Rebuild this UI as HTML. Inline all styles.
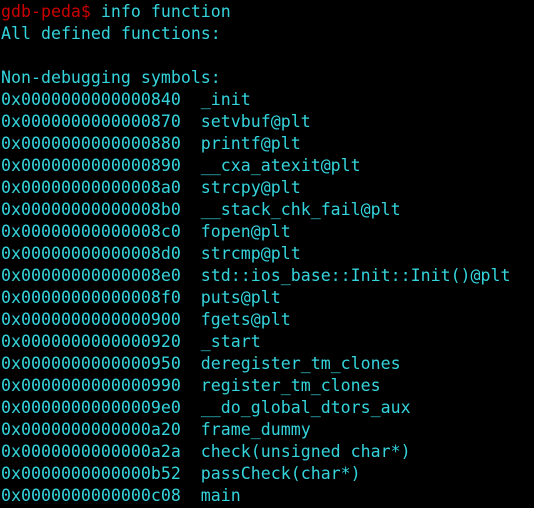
<!DOCTYPE html><html><head><style>
html,body{margin:0;background:#000;width:534px;height:508px;overflow:hidden}
pre{margin:0;padding:1px 0 0 1px;font-family:"DejaVu Sans Mono","Liberation Mono",monospace;font-size:16.6px;line-height:22px;color:#34d4dc;}
.r{color:#cc0000}
</style></head><body><pre><span class="r">gdb-peda$ </span>info function
All defined functions:

Non-debugging symbols:
0x0000000000000840  _init
0x0000000000000870  setvbuf@plt
0x0000000000000880  printf@plt
0x0000000000000890  __cxa_atexit@plt
0x00000000000008a0  strcpy@plt
0x00000000000008b0  __stack_chk_fail@plt
0x00000000000008c0  fopen@plt
0x00000000000008d0  strcmp@plt
0x00000000000008e0  std::ios_base::Init::Init()@plt
0x00000000000008f0  puts@plt
0x0000000000000900  fgets@plt
0x0000000000000920  _start
0x0000000000000950  deregister_tm_clones
0x0000000000000990  register_tm_clones
0x00000000000009e0  __do_global_dtors_aux
0x0000000000000a20  frame_dummy
0x0000000000000a2a  check(unsigned char*)
0x0000000000000b52  passCheck(char*)
0x0000000000000c08  main</pre></body></html>
